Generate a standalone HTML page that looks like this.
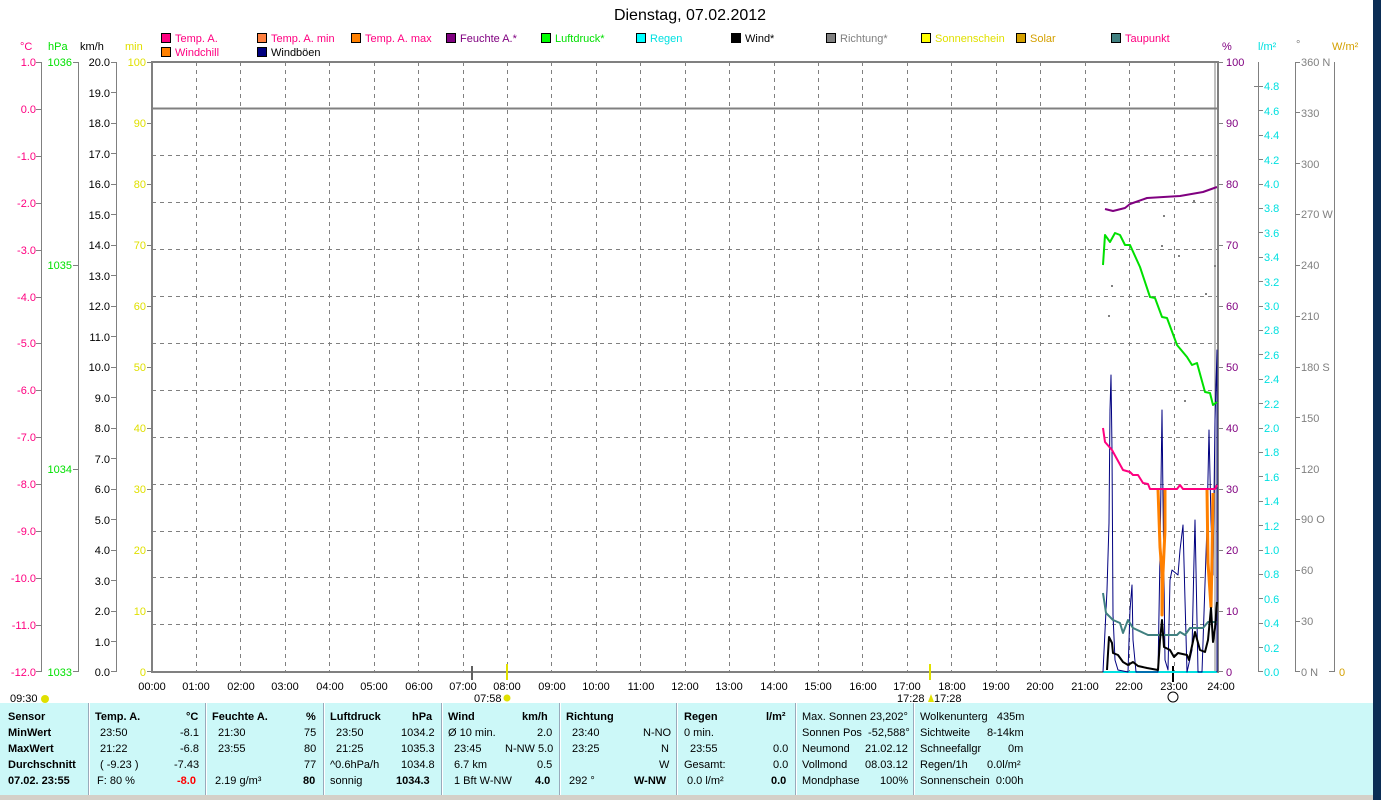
<!DOCTYPE html>
<html><head><meta charset="utf-8"><style>
*{margin:0;padding:0}
body{width:1381px;height:800px;background:#fff;position:relative;overflow:hidden;font-family:"Liberation Sans",sans-serif;font-size:11px}
svg{position:absolute;left:0;top:0}
svg text{font-family:"Liberation Sans",sans-serif;font-size:11px}
#tbl{position:absolute;left:0;top:703px;width:1373px;height:92px;background:#ccf8f8}
#tbl div{position:absolute;white-space:nowrap;font-size:11px}
.b{font-weight:bold}
.sep{position:absolute;top:0;width:1px;height:92px;background:#9ab;border-right:1px solid #fff}
</style></head><body>
<svg width="1381" height="800">
<rect x="1373" y="0" width="8" height="800" fill="#0b2d55"/>
<text x="690" y="20" text-anchor="middle" style="font-size:16px">Dienstag, 07.02.2012</text>
<g stroke="#000" stroke-width="1">
<rect x="161.5" y="33.5" width="9" height="9" fill="#ff0080"/>
<rect x="257.5" y="33.5" width="9" height="9" fill="#ff8040"/>
<rect x="351.5" y="33.5" width="9" height="9" fill="#ff8000"/>
<rect x="446.5" y="33.5" width="9" height="9" fill="#800080"/>
<rect x="541.5" y="33.5" width="9" height="9" fill="#00ff00"/>
<rect x="636.5" y="33.5" width="9" height="9" fill="#00ffff"/>
<rect x="731.5" y="33.5" width="9" height="9" fill="#000"/>
<rect x="826.5" y="33.5" width="9" height="9" fill="#808080"/>
<rect x="921.5" y="33.5" width="9" height="9" fill="#ffff00"/>
<rect x="1016.5" y="33.5" width="9" height="9" fill="#d4a000"/>
<rect x="1111.5" y="33.5" width="9" height="9" fill="#408080"/>
<rect x="161.5" y="47.5" width="9" height="9" fill="#ff8000"/>
<rect x="257.5" y="47.5" width="9" height="9" fill="#000080"/>
</g>
<g>
<text x="175" y="42" fill="#ff0080">Temp. A.</text>
<text x="271" y="42" fill="#ff0080">Temp. A. min</text>
<text x="365" y="42" fill="#ff0080">Temp. A. max</text>
<text x="460" y="42" fill="#800080">Feuchte A.*</text>
<text x="555" y="42" fill="#00e000">Luftdruck*</text>
<text x="650" y="42" fill="#00e0e0">Regen</text>
<text x="745" y="42" fill="#000">Wind*</text>
<text x="840" y="42" fill="#808080">Richtung*</text>
<text x="935" y="42" fill="#e0e000">Sonnenschein</text>
<text x="1030" y="42" fill="#d4a000">Solar</text>
<text x="1125" y="42" fill="#ff0080">Taupunkt</text>
<text x="175" y="56" fill="#ff0080">Windchill</text>
<text x="271" y="56" fill="#000">Windböen</text>
</g>
<text x="20" y="50" fill="#ff0080">°C</text>
<text x="48" y="50" fill="#00e000">hPa</text>
<text x="80" y="50" fill="#000">km/h</text>
<text x="125" y="50" fill="#e0e000">min</text>
<text x="1222" y="50" fill="#800080">%</text>
<text x="1258" y="50" fill="#00e0e0">l/m²</text>
<text x="1296" y="48" fill="#808080">°</text>
<text x="1332" y="50" fill="#d4a000">W/m²</text>
<!-- grid -->
<g stroke="#808080" stroke-dasharray="4,4" stroke-width="1">
<line x1="152" x2="1218" y1="155.5" y2="155.5"/><line x1="152" x2="1218" y1="202.5" y2="202.5"/><line x1="152" x2="1218" y1="249.5" y2="249.5"/><line x1="152" x2="1218" y1="296.5" y2="296.5"/><line x1="152" x2="1218" y1="343.5" y2="343.5"/><line x1="152" x2="1218" y1="390.5" y2="390.5"/><line x1="152" x2="1218" y1="437.5" y2="437.5"/><line x1="152" x2="1218" y1="484.5" y2="484.5"/><line x1="152" x2="1218" y1="531.5" y2="531.5"/><line x1="152" x2="1218" y1="577.5" y2="577.5"/><line x1="152" x2="1218" y1="624.5" y2="624.5"/>
<line x1="196.5" x2="196.5" y1="62" y2="672"/><line x1="240.5" x2="240.5" y1="62" y2="672"/><line x1="285.5" x2="285.5" y1="62" y2="672"/><line x1="329.5" x2="329.5" y1="62" y2="672"/><line x1="374.5" x2="374.5" y1="62" y2="672"/><line x1="418.5" x2="418.5" y1="62" y2="672"/><line x1="463.5" x2="463.5" y1="62" y2="672"/><line x1="507.5" x2="507.5" y1="62" y2="672"/><line x1="551.5" x2="551.5" y1="62" y2="672"/><line x1="596.5" x2="596.5" y1="62" y2="672"/><line x1="640.5" x2="640.5" y1="62" y2="672"/><line x1="685.5" x2="685.5" y1="62" y2="672"/><line x1="729.5" x2="729.5" y1="62" y2="672"/><line x1="774.5" x2="774.5" y1="62" y2="672"/><line x1="818.5" x2="818.5" y1="62" y2="672"/><line x1="862.5" x2="862.5" y1="62" y2="672"/><line x1="907.5" x2="907.5" y1="62" y2="672"/><line x1="951.5" x2="951.5" y1="62" y2="672"/><line x1="996.5" x2="996.5" y1="62" y2="672"/><line x1="1040.5" x2="1040.5" y1="62" y2="672"/><line x1="1085.5" x2="1085.5" y1="62" y2="672"/><line x1="1129.5" x2="1129.5" y1="62" y2="672"/><line x1="1174.5" x2="1174.5" y1="62" y2="672"/>
</g>
<g stroke="#808080" stroke-width="2" fill="none">
<rect x="152" y="62" width="1066" height="610"/>
<line x1="152" x2="1218" y1="108.5" y2="108.5"/>
<line x1="1215" x2="1215" y1="62" y2="672" stroke-width="1"/>
</g>
<!-- axis lines + ticks -->
<g stroke="#808080" stroke-width="1">
<line x1="41.5" x2="41.5" y1="62" y2="672"/><line x1="78.5" x2="78.5" y1="62" y2="672"/><line x1="116.5" x2="116.5" y1="62" y2="672"/>
<line x1="1258.5" x2="1258.5" y1="62" y2="672"/><line x1="1295.5" x2="1295.5" y1="62" y2="672"/><line x1="1334.5" x2="1334.5" y1="62" y2="672"/>
<path d="M36 62.5h6M36 109.5h6M36 156.5h6M36 203.5h6M36 250.5h6M36 297.5h6M36 343.5h6M36 390.5h6M36 437.5h6M36 484.5h6M36 531.5h6M36 578.5h6M36 625.5h6M36 671.5h6"/>
<path d="M73 62.5h6M73 265.5h6M73 469.5h6M73 671.5h6"/>
<path d="M111 62.5h6M111 92.5h6M111 123.5h6M111 153.5h6M111 184.5h6M111 214.5h6M111 245.5h6M111 275.5h6M111 306.5h6M111 336.5h6M111 367.5h6M111 397.5h6M111 428.5h6M111 458.5h6M111 489.5h6M111 519.5h6M111 550.5h6M111 580.5h6M111 611.5h6M111 641.5h6M111 671.5h6"/>
<path d="M147 62.5h5M147 123.5h5M147 184.5h5M147 245.5h5M147 306.5h5M147 367.5h5M147 428.5h5M147 489.5h5M147 550.5h5M147 611.5h5M147 671.5h5"/>
<path d="M1218 62.5h5M1218 123.5h5M1218 184.5h5M1218 245.5h5M1218 306.5h5M1218 367.5h5M1218 428.5h5M1218 489.5h5M1218 550.5h5M1218 611.5h5M1218 671.5h5"/>
<path d="M1254 86.5h9M1258 110.5h5M1258 135.5h5M1258 159.5h5M1258 184.5h5M1258 208.5h5M1258 232.5h5M1258 257.5h5M1258 281.5h5M1258 306.5h5M1258 330.5h5M1258 354.5h5M1258 379.5h5M1258 403.5h5M1258 428.5h5M1258 452.5h5M1258 476.5h5M1258 501.5h5M1258 525.5h5M1258 550.5h5M1258 574.5h5M1258 598.5h5M1258 623.5h5M1258 647.5h5M1258 671.5h5"/>
<path d="M1295 62.5h5M1295 112.5h5M1295 163.5h5M1295 214.5h5M1295 265.5h5M1295 316.5h5M1295 367.5h5M1295 417.5h5M1295 468.5h5M1295 519.5h5M1295 570.5h5M1295 621.5h5M1295 671.5h5"/>
<path d="M1329 671.5h6"/>
<line x1="472" x2="472" y1="666" y2="680" stroke-width="2" stroke="#606060"/>
<line x1="1173" x2="1173" y1="666" y2="682" stroke-width="2" stroke="#000"/>
</g>
<line x1="507" x2="507" y1="664" y2="680" stroke="#e0e000" stroke-width="2"/>
<line x1="930" x2="930" y1="664" y2="680" stroke="#e0e000" stroke-width="2"/>
<!-- left labels -->
<g fill="#ff0080" text-anchor="end">
<text x="36" y="66">1.0</text><text x="36" y="113">0.0</text><text x="36" y="160">-1.0</text><text x="36" y="207">-2.0</text><text x="36" y="254">-3.0</text><text x="36" y="301">-4.0</text><text x="36" y="347">-5.0</text><text x="36" y="394">-6.0</text><text x="36" y="441">-7.0</text><text x="36" y="488">-8.0</text><text x="36" y="535">-9.0</text><text x="36" y="582">-10.0</text><text x="36" y="629">-11.0</text><text x="36" y="676">-12.0</text>
</g>
<g fill="#00e000" text-anchor="end"><text x="72" y="66">1036</text><text x="72" y="269">1035</text><text x="72" y="473">1034</text><text x="72" y="676">1033</text></g>
<g text-anchor="end">
<text x="110" y="66">20.0</text><text x="110" y="97">19.0</text><text x="110" y="127">18.0</text><text x="110" y="158">17.0</text><text x="110" y="188">16.0</text><text x="110" y="219">15.0</text><text x="110" y="249">14.0</text><text x="110" y="280">13.0</text><text x="110" y="310">12.0</text><text x="110" y="341">11.0</text><text x="110" y="371">10.0</text><text x="110" y="402">9.0</text><text x="110" y="432">8.0</text><text x="110" y="463">7.0</text><text x="110" y="493">6.0</text><text x="110" y="524">5.0</text><text x="110" y="554">4.0</text><text x="110" y="585">3.0</text><text x="110" y="615">2.0</text><text x="110" y="646">1.0</text><text x="110" y="676">0.0</text>
</g>
<g fill="#e0e000" text-anchor="end">
<text x="146" y="66">100</text><text x="146" y="127">90</text><text x="146" y="188">80</text><text x="146" y="249">70</text><text x="146" y="310">60</text><text x="146" y="371">50</text><text x="146" y="432">40</text><text x="146" y="493">30</text><text x="146" y="554">20</text><text x="146" y="615">10</text><text x="146" y="676">0</text>
</g>
<g fill="#800080">
<text x="1226" y="66">100</text><text x="1226" y="127">90</text><text x="1226" y="188">80</text><text x="1226" y="249">70</text><text x="1226" y="310">60</text><text x="1226" y="371">50</text><text x="1226" y="432">40</text><text x="1226" y="493">30</text><text x="1226" y="554">20</text><text x="1226" y="615">10</text><text x="1226" y="676">0</text>
</g>
<g fill="#00e0e0">
<text x="1264" y="90">4.8</text><text x="1264" y="115">4.6</text><text x="1264" y="139">4.4</text><text x="1264" y="164">4.2</text><text x="1264" y="188">4.0</text><text x="1264" y="212">3.8</text><text x="1264" y="237">3.6</text><text x="1264" y="261">3.4</text><text x="1264" y="286">3.2</text><text x="1264" y="310">3.0</text><text x="1264" y="334">2.8</text><text x="1264" y="359">2.6</text><text x="1264" y="383">2.4</text><text x="1264" y="408">2.2</text><text x="1264" y="432">2.0</text><text x="1264" y="456">1.8</text><text x="1264" y="481">1.6</text><text x="1264" y="505">1.4</text><text x="1264" y="530">1.2</text><text x="1264" y="554">1.0</text><text x="1264" y="578">0.8</text><text x="1264" y="603">0.6</text><text x="1264" y="627">0.4</text><text x="1264" y="652">0.2</text><text x="1264" y="676">0.0</text>
</g>
<g fill="#808080">
<text x="1301" y="66">360 N</text><text x="1301" y="117">330</text><text x="1301" y="168">300</text><text x="1301" y="218">270 W</text><text x="1301" y="269">240</text><text x="1301" y="320">210</text><text x="1301" y="371">180 S</text><text x="1301" y="422">150</text><text x="1301" y="473">120</text><text x="1301" y="523">90  O</text><text x="1301" y="574">60</text><text x="1301" y="625">30</text><text x="1301" y="676">0  N</text>
</g>
<text x="1339" y="676" fill="#d4a000">0</text>
<!-- hour labels -->
<g text-anchor="middle">
<text x="152" y="690">00:00</text><text x="196" y="690">01:00</text><text x="241" y="690">02:00</text><text x="285" y="690">03:00</text><text x="330" y="690">04:00</text><text x="374" y="690">05:00</text><text x="419" y="690">06:00</text><text x="463" y="690">07:00</text><text x="507" y="690">08:00</text><text x="552" y="690">09:00</text><text x="596" y="690">10:00</text><text x="641" y="690">11:00</text><text x="685" y="690">12:00</text><text x="729" y="690">13:00</text><text x="774" y="690">14:00</text><text x="818" y="690">15:00</text><text x="863" y="690">16:00</text><text x="907" y="690">17:00</text><text x="952" y="690">18:00</text><text x="996" y="690">19:00</text><text x="1040" y="690">20:00</text><text x="1085" y="690">21:00</text><text x="1129" y="690">22:00</text><text x="1174" y="690">23:00</text><text x="1221" y="690">24:00</text>
</g>
<text x="10" y="702">09:30</text><circle cx="45" cy="699" r="4" fill="#e0e000"/>
<text x="474" y="702">07:58</text><circle cx="507" cy="698" r="3.5" fill="#e0e000"/>
<text x="897" y="702">17:28</text><text x="934" y="702">17:28</text><path d="M928 702 L931 694 L934 702Z" fill="#e0e000"/>
<circle cx="1173" cy="697" r="5" fill="none" stroke="#000"/>
<!-- data -->
<g fill="none" stroke-linejoin="round">
<polyline stroke="#00e0e0" stroke-width="2" points="1103,672 1217,672"/>
<polyline stroke="#000080" stroke-width="1" points="1103,672 1107,590 1109,523 1110,410 1111,375 1112,450 1113,615 1115,660 1118,670 1128,672 1130,610 1132,585 1133,640 1136,672 1158,672 1160,555 1162,410 1163,500 1165,660 1168,670 1170,580 1172,570 1178,575 1180,550 1183,525 1185,600 1187,672 1192,650 1194,560 1195,520 1196,570 1198,672 1202,672 1207,525 1209,430 1211,520 1213,575 1215,420 1217,350 1217,672"/>
<polyline stroke="#800080" stroke-width="2" points="1105,209 1113,211 1125,208 1130,204 1147,198 1180,196 1203,192 1217,187"/>
<polyline stroke="#00e000" stroke-width="2" points="1103,265 1105,235 1110,242 1115,233 1120,235 1125,245 1130,245 1140,267 1150,297 1155,298 1162,317 1167,318 1177,345 1187,357 1192,365 1197,363 1205,392 1210,393 1213,405 1217,402"/>
<polyline stroke="#ff8000" stroke-width="3" points="1158,489 1160,547 1162,573 1162,615 1163,573 1165,530 1165,489"/>
<polyline stroke="#ff8000" stroke-width="3" points="1207,489 1208,563 1211,607 1212,560 1213,493"/>
<polyline stroke="#ff0080" stroke-width="2" points="1103,428 1105,442 1112,450 1123,470 1130,472 1133,475 1138,475 1143,483 1148,484 1150,489 1177,489 1180,485 1183,489 1215,489 1217,485"/>
<polyline stroke="#408080" stroke-width="2" points="1103,593 1106,613 1113,620 1120,623 1123,633 1128,620 1133,628 1148,635 1177,635 1180,632 1185,635 1190,628 1203,628 1208,622 1217,622"/>
<polyline stroke="#000" stroke-width="2" points="1107,670 1109,637 1112,643 1113,653 1118,655 1123,662 1128,665 1133,662 1138,666 1147,668 1158,670 1160,640 1162,620 1164,647 1170,650 1174,657 1178,653 1187,655 1189,660 1195,632 1200,650 1205,652 1208,640 1211,608 1213,642 1215,628 1217,602"/>
</g>
<g fill="#808080"><rect x="1111" y="285" width="2" height="2"/><rect x="1108" y="315" width="2" height="2"/><rect x="1161" y="245" width="2" height="2"/><rect x="1163" y="215" width="2" height="2"/><rect x="1178" y="255" width="2" height="2"/><rect x="1184" y="400" width="2" height="2"/><rect x="1205" y="293" width="2" height="2"/><rect x="1214" y="265" width="2" height="2"/><rect x="1193" y="200" width="2" height="2"/></g>
<rect x="0" y="795" width="1373" height="5" fill="#d4d0c8"/>
</svg>
<div id="tbl">
<div class="sep" style="left:88px"></div><div class="sep" style="left:205px"></div><div class="sep" style="left:323px"></div><div class="sep" style="left:441px"></div><div class="sep" style="left:559px"></div><div class="sep" style="left:676px"></div><div class="sep" style="left:795px"></div><div class="sep" style="left:913px"></div>
<div class="b" style="left:8px;top:8px">Sensor</div><div class="b" style="left:8px;top:24px">MinWert</div><div class="b" style="left:8px;top:40px">MaxWert</div><div class="b" style="left:8px;top:56px">Durchschnitt</div><div class="b" style="left:8px;top:72px">07.02. 23:55</div>
<div class="b" style="left:95px;top:8px">Temp. A.</div><div class="b" style="left:186px;top:8px">°C</div>
<div style="left:100px;top:24px">23:50</div><div style="left:180px;top:24px">-8.1</div>
<div style="left:100px;top:40px">21:22</div><div style="left:180px;top:40px">-6.8</div>
<div style="left:100px;top:56px">( -9.23 )</div><div style="left:174px;top:56px">-7.43</div>
<div style="left:97px;top:72px">F: 80 %</div><div class="b" style="left:177px;top:72px;color:#f00">-8.0</div>
<div class="b" style="left:212px;top:8px">Feuchte A.</div><div class="b" style="left:306px;top:8px">%</div>
<div style="left:218px;top:24px">21:30</div><div style="left:304px;top:24px">75</div>
<div style="left:218px;top:40px">23:55</div><div style="left:304px;top:40px">80</div>
<div style="left:304px;top:56px">77</div>
<div style="left:215px;top:72px">2.19 g/m³</div><div class="b" style="left:303px;top:72px">80</div>
<div class="b" style="left:330px;top:8px">Luftdruck</div><div class="b" style="left:412px;top:8px">hPa</div>
<div style="left:336px;top:24px">23:50</div><div style="left:401px;top:24px">1034.2</div>
<div style="left:336px;top:40px">21:25</div><div style="left:401px;top:40px">1035.3</div>
<div style="left:330px;top:56px">^0.6hPa/h</div><div style="left:401px;top:56px">1034.8</div>
<div style="left:330px;top:72px">sonnig</div><div class="b" style="left:396px;top:72px">1034.3</div>
<div class="b" style="left:448px;top:8px">Wind</div><div class="b" style="left:522px;top:8px">km/h</div>
<div style="left:448px;top:24px">Ø 10 min.</div><div style="left:537px;top:24px">2.0</div>
<div style="left:454px;top:40px">23:45</div><div style="left:505px;top:40px">N-NW 5.0</div>
<div style="left:454px;top:56px">6.7 km</div><div style="left:537px;top:56px">0.5</div>
<div style="left:454px;top:72px">1 Bft W-NW</div><div class="b" style="left:535px;top:72px">4.0</div>
<div class="b" style="left:566px;top:8px">Richtung</div>
<div style="left:572px;top:24px">23:40</div><div style="left:643px;top:24px">N-NO</div>
<div style="left:572px;top:40px">23:25</div><div style="left:661px;top:40px">N</div>
<div style="left:659px;top:56px">W</div>
<div style="left:569px;top:72px">292 °</div><div class="b" style="left:634px;top:72px">W-NW</div>
<div class="b" style="left:684px;top:8px">Regen</div><div class="b" style="left:766px;top:8px">l/m²</div>
<div style="left:684px;top:24px">0 min.</div>
<div style="left:690px;top:40px">23:55</div><div style="left:773px;top:40px">0.0</div>
<div style="left:684px;top:56px">Gesamt:</div><div style="left:773px;top:56px">0.0</div>
<div style="left:687px;top:72px">0.0 l/m²</div><div class="b" style="left:771px;top:72px">0.0</div>
<div style="left:802px;top:8px">Max. Sonnen 23,202°</div>
<div style="left:802px;top:24px">Sonnen Pos &nbsp;-52,588°</div>
<div style="left:802px;top:40px">Neumond</div><div style="left:865px;top:40px">21.02.12</div>
<div style="left:802px;top:56px">Vollmond</div><div style="left:865px;top:56px">08.03.12</div>
<div style="left:802px;top:72px">Mondphase</div><div style="left:880px;top:72px">100%</div>
<div style="left:920px;top:8px">Wolkenunterg &nbsp;&nbsp;435m</div>
<div style="left:920px;top:24px">Sichtweite</div><div style="left:987px;top:24px">8-14km</div>
<div style="left:920px;top:40px">Schneefallgr</div><div style="left:1008px;top:40px">0m</div>
<div style="left:920px;top:56px">Regen/1h</div><div style="left:987px;top:56px">0.0l/m²</div>
<div style="left:920px;top:72px">Sonnenschein &nbsp;0:00h</div>
</div>
</body></html>
